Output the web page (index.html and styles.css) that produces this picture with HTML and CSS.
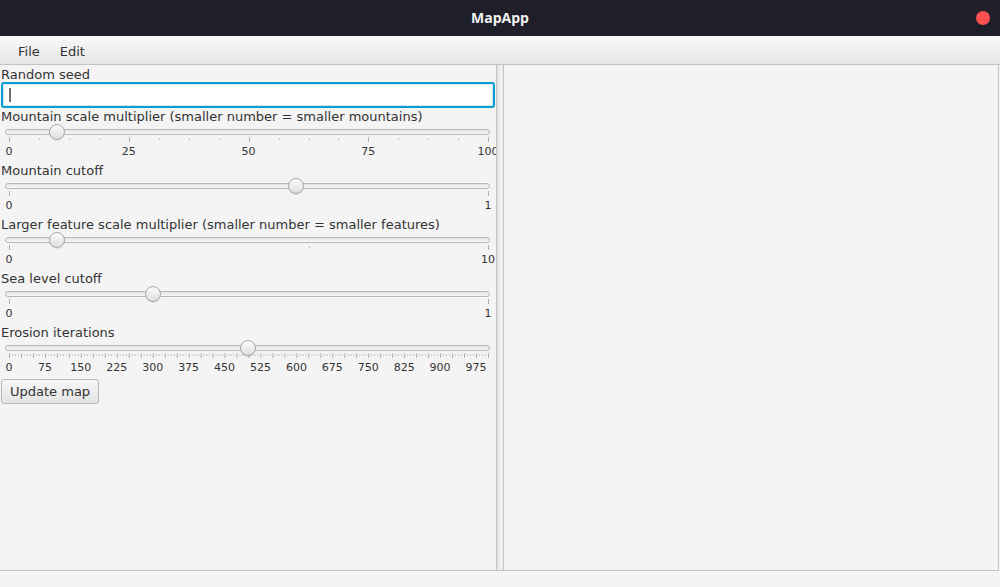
FILE: index.html
```html
<!DOCTYPE html>
<html>
<head>
<meta charset="utf-8">
<title>MapApp</title>
<link rel="stylesheet" href="styles.css">
</head>
<body>
<div class="window">
  <header class="titlebar">
    <span class="title">MapApp</span>
    <span class="close"></span>
  </header>
  <nav class="menubar">
    <span class="menu">File</span>
    <span class="menu">Edit</span>
  </nav>
  <main class="split">
    <section class="pane-left">
      <div class="field-label">Random seed</div>
      <div class="textfield"><span class="caret"></span></div>

      <div class="field-label">Mountain scale multiplier (smaller number = smaller mountains)</div>
      <div class="slider">
        <div class="track"></div>
        <svg class="ticks" width="496" height="6">
          <g class="major">
            <line x1="9.5" y1="0" x2="9.5" y2="5"/><line x1="129.5" y1="0" x2="129.5" y2="5"/><line x1="249.5" y1="0" x2="249.5" y2="5"/><line x1="368.5" y1="0" x2="368.5" y2="5"/><line x1="488.5" y1="0" x2="488.5" y2="5"/>
          </g>
          <g class="minor">
            <line x1="39.5" y1="1" x2="39.5" y2="3"/><line x1="69.5" y1="1" x2="69.5" y2="3"/><line x1="99.5" y1="1" x2="99.5" y2="3"/>
            <line x1="159.5" y1="1" x2="159.5" y2="3"/><line x1="189.5" y1="1" x2="189.5" y2="3"/><line x1="219.5" y1="1" x2="219.5" y2="3"/>
            <line x1="279.5" y1="1" x2="279.5" y2="3"/><line x1="309.5" y1="1" x2="309.5" y2="3"/><line x1="338.5" y1="1" x2="338.5" y2="3"/>
            <line x1="398.5" y1="1" x2="398.5" y2="3"/><line x1="428.5" y1="1" x2="428.5" y2="3"/><line x1="458.5" y1="1" x2="458.5" y2="3"/>
          </g>
        </svg>
        <div class="scale">
          <span style="left:0%">0</span><span style="left:25%">25</span><span style="left:50%">50</span><span style="left:75%">75</span><span style="left:100%">100</span>
        </div>
        <div class="thumb" style="left:49px"></div>
      </div>

      <div class="field-label">Mountain cutoff</div>
      <div class="slider">
        <div class="track"></div>
        <svg class="ticks" width="496" height="6">
          <g class="major"><line x1="9.5" y1="0" x2="9.5" y2="5"/><line x1="488.5" y1="0" x2="488.5" y2="5"/></g>
        </svg>
        <div class="scale"><span style="left:0%">0</span><span style="left:100%">1</span></div>
        <div class="thumb" style="left:288px"></div>
      </div>

      <div class="field-label">Larger feature scale multiplier (smaller number = smaller features)</div>
      <div class="slider">
        <div class="track"></div>
        <svg class="ticks" width="496" height="6">
          <g class="major"><line x1="9.5" y1="0" x2="9.5" y2="5"/><line x1="488.5" y1="0" x2="488.5" y2="5"/></g>
          <g class="minor"><line x1="309.5" y1="1" x2="309.5" y2="3"/></g>
        </svg>
        <div class="scale"><span style="left:0%">0</span><span style="left:100%">10</span></div>
        <div class="thumb" style="left:49px"></div>
      </div>

      <div class="field-label">Sea level cutoff</div>
      <div class="slider">
        <div class="track"></div>
        <svg class="ticks" width="496" height="6">
          <g class="major"><line x1="9.5" y1="0" x2="9.5" y2="5"/><line x1="488.5" y1="0" x2="488.5" y2="5"/></g>
        </svg>
        <div class="scale"><span style="left:0%">0</span><span style="left:100%">1</span></div>
        <div class="thumb" style="left:145px"></div>
      </div>

      <div class="field-label">Erosion iterations</div>
      <div class="slider">
        <div class="track"></div>
        <svg class="ticks" width="496" height="6">
          <defs>
            <pattern id="dense" patternUnits="userSpaceOnUse" x="9" y="0" width="11.975" height="6">
              <line class="pmajor" x1="0.5" y1="0" x2="0.5" y2="5"/>
              <line class="pminor" x1="3.5" y1="1" x2="3.5" y2="3"/>
              <line class="pminor" x1="6.5" y1="1" x2="6.5" y2="3"/>
              <line class="pminor" x1="9.5" y1="1" x2="9.5" y2="3"/>
            </pattern>
          </defs>
          <rect x="9" y="0" width="481" height="6" fill="url(#dense)"/>
        </svg>
        <div class="scale">
          <span style="left:0%">0</span><span style="left:7.5%">75</span><span style="left:15%">150</span><span style="left:22.5%">225</span><span style="left:30%">300</span><span style="left:37.5%">375</span><span style="left:45%">450</span><span style="left:52.5%">525</span><span style="left:60%">600</span><span style="left:67.5%">675</span><span style="left:75%">750</span><span style="left:82.5%">825</span><span style="left:90%">900</span><span style="left:97.5%">975</span>
        </div>
        <div class="thumb" style="left:240px"></div>
      </div>

      <button class="btn">Update map</button>
    </section>
    <div class="divider"></div>
    <section class="pane-right"></section>
  </main>
  <footer class="statusbar"></footer>
</div>
</body>
</html>
```

FILE: styles.css
```css
* { box-sizing: border-box; }
html, body { margin: 0; padding: 0; }
body {
  width: 1000px;
  height: 587px;
  overflow: hidden;
  background: #f4f4f4;
  font-family: "DejaVu Sans", "Liberation Sans", sans-serif;
  font-size: 13px;
  color: #333333;
}
.window {
  display: flex;
  flex-direction: column;
  height: 587px;
}
.titlebar {
  height: 36px;
  flex: none;
  background: #1f1f29;
  display: flex;
  align-items: center;
  justify-content: center;
  padding-bottom: 2px;
  position: relative;
}
.title {
  color: #f2f2f2;
  font-family: "Open Sans", "DejaVu Sans", sans-serif;
  font-weight: 700;
  font-size: 14px;
}
.close {
  position: absolute;
  right: 10px;
  top: 11px;
  width: 14px;
  height: 14px;
  border-radius: 50%;
  background: #fd5050;
}
.menubar {
  height: 29px;
  flex: none;
  display: flex;
  align-items: center;
  padding-left: 8px;
  padding-top: 3px;
  background: linear-gradient(#f9f9f9, #e5e5e5);
  border-bottom: 1px solid #c2c2c2;
}
.menu {
  padding: 0 10px;
  line-height: 22px;
  color: #333;
}
.split {
  flex: none;
  height: 506px;
  display: flex;
  border-right: 1px solid #c4c4c4;
  border-bottom: 1px solid #c4c4c4;
  margin-right: 1px;
}
.pane-left {
  width: 496px;
  flex: none;
  padding-top: 1px;
  overflow: hidden;
  display: flex;
  flex-direction: column;
}
.field-label {
  line-height: 15px;
  height: 16px;
  padding: 1px 0 0 1px;
  white-space: nowrap;
}
.textfield {
  height: 26px;
  margin: 0 1px;
  background: #ffffff;
  border: 2px solid #0a9bd2;
  border-radius: 3px;
  box-shadow: inset 0 0 0 1px #d6eef7;
  padding: 4px 0 0 6px;
}
.caret {
  display: block;
  width: 2px;
  height: 14px;
  background: #6e6e6e;
}
.slider {
  position: relative;
  height: 38px;
  padding-top: 5px;
}
.track {
  margin-left: 5px;
  width: 485px;
  height: 6px;
  border: 1px solid #b9b9b9;
  border-radius: 3px;
  background: linear-gradient(#e4e4e4, #f8f8f8);
}
.ticks {
  display: block;
  margin-top: 2px;
}
.ticks line { shape-rendering: crispEdges; stroke-width: 1; }
.ticks .major line { stroke: #b0b0b0; }
.ticks .minor line { stroke: #c4c4c4; }
.pmajor { stroke: #b0b0b0; stroke-width: 1; }
.pminor { stroke: #c6c6c6; stroke-width: 1; }
.scale {
  position: relative;
  margin-left: 9px;
  width: 479px;
  height: 13px;
  margin-top: 2px;
  font-size: 11px;
  line-height: 13px;
  color: #333333;
}
.scale span {
  position: absolute;
  top: 0;
  transform: translateX(-50%);
  white-space: nowrap;
}
.thumb {
  position: absolute;
  top: 0;
  width: 16px;
  height: 16px;
  border-radius: 50%;
  border: 1px solid #a8a8a8;
  background: linear-gradient(#fbfbfb, #dedede);
  box-shadow: 0 1px 1px rgba(0,0,0,0.08);
}
.btn {
  align-self: flex-start;
  margin: 1px 0 0 1px;
  height: 25px;
  padding: 0 8px;
  font-family: "DejaVu Sans", "Liberation Sans", sans-serif;
  font-size: 13px;
  color: #333;
  background: linear-gradient(#f7f7f7, #e3e3e3);
  border: 1px solid #b8b8b8;
  border-radius: 3px;
}
.divider {
  width: 8px;
  flex: none;
  border-left: 1px solid #c6c6c6;
  border-right: 1px solid #c6c6c6;
  background: linear-gradient(to right, #dcdcdc, #f4f4f4 60%, #e8e8e8);
}
.pane-right {
  flex: 1;
}
.statusbar {
  flex: 1;
}
```
